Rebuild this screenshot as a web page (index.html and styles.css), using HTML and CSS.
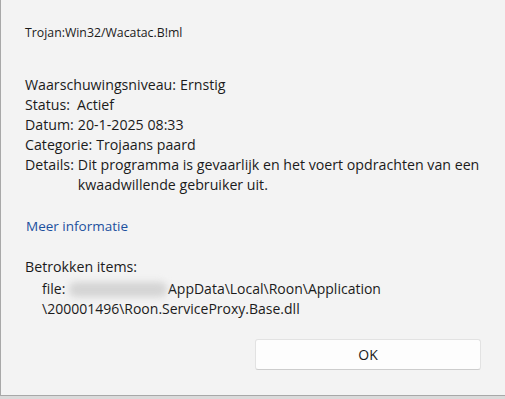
FILE: index.html
```html
<!DOCTYPE html>
<html lang="nl">
<head>
    <meta charset="UTF-8">
    <title>Trojan:Win32/Wacatac.B!ml</title>
    <link rel="stylesheet" href="styles.css">
</head>
<body>
    <div class="dialog">
        <div class="threat-name">Trojan:Win32/Wacatac.B!ml</div>

        <div class="info">
            <div class="row"><span class="key">Waarschuwingsniveau:</span><span class="value">Ernstig</span></div>
            <div class="row"><span class="key">Status:</span><span class="value wide">Actief</span></div>
            <div class="row"><span class="key">Datum:</span><span class="value">20-1-2025 08:33</span></div>
            <div class="row"><span class="key">Categorie:</span><span class="value">Trojaans paard</span></div>
            <div class="row"><span class="key">Details:</span><span class="value">Dit programma is gevaarlijk en het voert opdrachten van een<br>kwaadwillende gebruiker uit.</span></div>
        </div>

        <a class="more" href="#">Meer informatie</a>

        <div class="items">
            <div class="items-title">Betrokken items:</div>
            <div class="path">
                file: <span class="redacted"></span>AppData\Local\Roon\Application<br>
                \200001496\Roon.ServiceProxy.Base.dll
            </div>
        </div>

        <button class="ok">OK</button>
    </div>
</body>
</html>
```

FILE: styles.css
```css
html, body {
    margin: 0;
    height: 100%;
}
body {
    background-color: #dadada;
    font-family: "Segoe UI", "Open Sans", "Noto Sans", sans-serif;
    color: #1b1b1b;
}
.dialog {
    height: 396px;
    box-sizing: border-box;
    background-color: #f3f3f3;
    border-left: 1px solid #a8a8a8;
    border-bottom: 1px solid #a8a8a8;
    padding: 25px 24px 25px 24px;
    display: flex;
    flex-direction: column;
    align-items: flex-start;
}
.threat-name {
    font-size: 12.3px;
    line-height: 16px;
}
.info {
    align-self: stretch;
    margin-top: 34px;
    margin-right: -20px; /* 详情行比按钮宽 */
    font-size: 14.2px;
    line-height: 20px;
}
.row {
    display: flex;
}
.key {
    flex-shrink: 0;
}
.value {
    flex: 1;
    margin-left: 4px;
    white-space: nowrap;
}
.value.wide {
    margin-left: 7px;
}
.more {
    margin-top: 22px;
    margin-left: 1px;
    font-size: 13.5px;
    line-height: 18px;
    color: #1c509e;
    text-decoration: none;
}
.items {
    margin-top: 22px;
    font-size: 14.2px;
    line-height: 20px;
}
.path {
    margin-top: 2px;
    padding-left: 17px;
    font-size: 14px;
    line-height: 20px;
}
.redacted {
    display: inline-block;
    width: 98px;
    height: 15px;
    margin: 0 1px 0 0;
    vertical-align: -3px;
    background-color: #d4d4d4;
    border-radius: 7px;
    filter: blur(3.5px);
}
.ok {
    margin-top: auto;
    align-self: flex-end;
    width: 226px;
    height: 31px;
    background-color: #fdfdfd;
    border: 1px solid #e2e2e2;
    border-bottom-color: #cdcdcd;
    border-radius: 3px;
    font-family: inherit;
    font-size: 14px;
    color: #1b1b1b;
}
```
